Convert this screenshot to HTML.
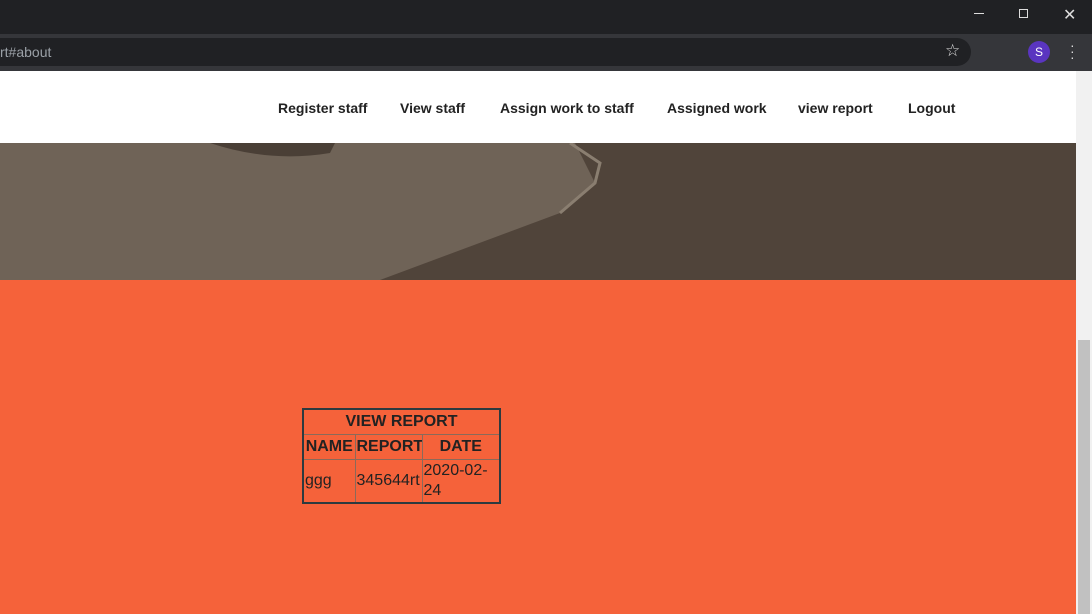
<!DOCTYPE html>
<html><head><style>
*{margin:0;padding:0;box-sizing:border-box}
body{width:1092px;height:614px;overflow:hidden;font-family:"Liberation Sans",sans-serif;background:#f5623a;position:relative}
.top{position:absolute;left:0;top:0;width:1092px;height:34px;background:#202124}
.tb{position:absolute;left:0;top:34px;width:1092px;height:37px;background:#35363a}
.url{position:absolute;left:0;top:38px;width:971px;height:28px;background:#202124;border-radius:0 14px 14px 0;color:#9aa0a6;font-size:14px;line-height:28px}
.nav{position:absolute;left:0;top:71px;width:1076px;height:72px;background:#fff}
.nav a{position:absolute;top:29px;font-size:14px;font-weight:bold;color:#222;text-decoration:none}
.hero{position:absolute;left:0;top:143px;width:1076px;height:137px;background:#50443a}
.sb{position:absolute;left:1076px;top:71px;width:16px;height:543px;background:#f1f1f1}
.th{position:absolute;left:1078px;top:340px;width:12px;height:274px;background:#c1c1c1}
table{position:absolute;left:302px;top:408px;width:199px;border-collapse:collapse;border:2px solid #2c3a3f;color:#222;font-family:"Liberation Sans",sans-serif;font-size:16px;table-layout:fixed}
td,th{border:1px solid #8a6a5a;padding:0 1px;overflow:hidden;white-space:nowrap}
th{height:25px;font-weight:bold}
td{line-height:20px}
</style></head><body>
<div class="top"></div>
<div style="position:absolute;left:974px;top:13px;width:10px;height:1px;background:#ddd"></div>
<div style="position:absolute;left:1019px;top:9px;width:9px;height:9px;border:1px solid #ddd"></div>
<div style="position:absolute;left:1063px;top:5px;color:#ddd;font-size:16px">✕</div>
<div class="tb"></div>
<div class="url">rt#about</div>
<div style="position:absolute;left:945px;top:41px;color:#ddd;font-size:17px">☆</div>
<div style="position:absolute;left:1028px;top:41px;width:22px;height:22px;border-radius:50%;background:#5a35c0;color:#fff;font-size:12px;text-align:center;line-height:22px">S</div>
<div style="position:absolute;left:1070px;top:42px;color:#ddd;font-size:14px;line-height:6px">·<br>·<br>·</div>
<div class="nav">
<a style="left:278px">Register staff</a><a style="left:400px">View staff</a><a style="left:500px">Assign work to staff</a><a style="left:667px">Assigned work</a><a style="left:798px">view report</a><a style="left:908px">Logout</a>
</div>
<div class="hero"><svg width="1076" height="137">
<polygon points="0,0 575,0 595,40 560,70 380,137 0,137" fill="#6f6357"/>
<path d="M210,0 Q270,20 330,10 L335,0 Z" fill="#4a3f36"/>
<path d="M570,0 L600,20 L595,40 L560,70" fill="none" stroke="#8a7e70" stroke-width="3"/>
</svg></div>
<div class="sb"></div><div class="th"></div>
<table>
<colgroup><col style="width:52px"><col style="width:67px"><col></colgroup>
<tr><th colspan="3">VIEW REPORT</th></tr>
<tr><th>NAME</th><th>REPORT</th><th>DATE</th></tr>
<tr><td style="height:44px">ggg</td><td>345644rt</td><td>2020-02-<br>24</td></tr>
</table>
</body></html>
